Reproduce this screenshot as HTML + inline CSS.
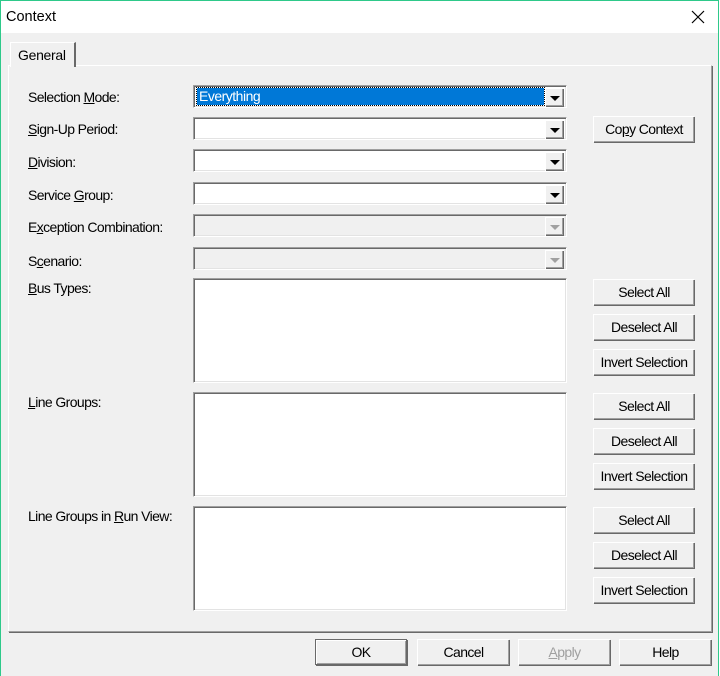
<!DOCTYPE html>
<html><head><meta charset="utf-8"><style>
*{box-sizing:border-box;margin:0;padding:0}
body{width:720px;height:676px;background:#fff;font-family:"Liberation Sans",Arial,sans-serif;font-size:14px;color:#000;position:relative;overflow:hidden}
.win{position:absolute;left:0;top:0;width:719px;height:676px;border:1px solid #2ec98a;border-bottom:none;background:#f0f0f0}
.title{position:absolute;left:0;top:0;width:717px;height:32px;background:#fff}
.title span{position:absolute;left:5px;top:8px;font-size:14.5px}
.x{position:absolute;left:690px;top:9px}
.a{position:absolute}
.panel{left:8px;top:65px;width:704px;height:567px;border-top:1px solid #fff;border-left:1px solid #fff;border-right:1px solid #a0a0a0;border-bottom:1px solid #a0a0a0;box-shadow:1px 1px 0 #696969}
.tab{left:10px;top:42px;width:66px;height:25px;background:#f0f0f0;border-top:1px solid #fff;border-left:1px solid #fff;border-right:2px solid #696969;padding:4px 0 0 7px;font-size:14px;letter-spacing:-0.3px}
.lbl{left:28px;font-size:14px;letter-spacing:-0.6px}
.sunk{border-top:1px solid #a0a0a0;border-left:1px solid #a0a0a0;border-right:1px solid #fff;border-bottom:1px solid #fff;box-shadow:inset 1px 1px 0 #696969,inset -1px -1px 0 #e3e3e3;background:#fff}
.cb{left:193px;width:374px;height:23px}
.dis{background:#f0f0f0}
.dd{position:absolute;right:2px;top:2px;width:19px;height:19px;background:#f0f0f0;border-top:1px solid #fff;border-left:1px solid #fff;box-shadow:inset -1px -1px 0 #696969,inset -2px -2px 0 #a0a0a0}
.dd:after{content:"";position:absolute;left:4px;top:7px;border-left:5px solid transparent;border-right:5px solid transparent;border-top:5px solid #000}
.dis .dd:after{border-top-color:#a0a0a0}
.lb{left:193px;width:374px;height:105px}
.btn{background:#f0f0f0;border-top:1px solid #fff;border-left:1px solid #fff;box-shadow:inset -1px -1px 0 #a0a0a0,1px 1px 0 #696969;text-align:center;font-size:14px;line-height:24px;height:26px;letter-spacing:-0.6px}
.rb{left:593px;width:101px}
.bb{top:639px;width:92px;height:26px}
u{text-decoration:underline}
</style></head><body>
<div class="win">
<div class="title"><span>Context</span>
<svg class="x" width="14" height="14" viewBox="0 0 14 14"><path d="M1 1L13 13M13 1L1 13" stroke="#000" stroke-width="1.2"/></svg></div>
</div>
<div class="a panel"></div>
<div class="a tab">General</div>

<div class="a lbl" style="top:89px">Selection <u>M</u>ode:</div>
<div class="a lbl" style="top:121px"><u>S</u>ign-Up Period:</div>
<div class="a lbl" style="top:154px"><u>D</u>ivision:</div>
<div class="a lbl" style="top:187px">Service <u>G</u>roup:</div>
<div class="a lbl" style="top:219px">E<u>x</u>ception Combination:</div>
<div class="a lbl" style="top:253px">S<u>c</u>enario:</div>
<div class="a lbl" style="top:280px"><u>B</u>us Types:</div>
<div class="a lbl" style="top:394px"><u>L</u>ine Groups:</div>
<div class="a lbl" style="top:508px">Line Groups in <u>R</u>un View:</div>

<div class="a sunk cb" style="top:85px"><div style="position:absolute;left:3px;top:2px;width:347px;height:17px;background:#0078d7;color:#fff;outline:1px dotted #000;padding-left:2px;line-height:17px;letter-spacing:-0.5px">Everything</div><div class="dd"></div></div>
<div class="a sunk cb" style="top:117px"><div class="dd"></div></div>
<div class="a sunk cb" style="top:149px"><div class="dd"></div></div>
<div class="a sunk cb" style="top:182px"><div class="dd"></div></div>
<div class="a sunk cb dis" style="top:214px"><div class="dd"></div></div>
<div class="a sunk cb dis" style="top:247px"><div class="dd"></div></div>

<div class="a sunk lb" style="top:278px"></div>
<div class="a sunk lb" style="top:392px"></div>
<div class="a sunk lb" style="top:506px"></div>

<div class="a btn rb" style="top:116px">Co<u>p</u>y Context</div>
<div class="a btn rb" style="top:279px">Select All</div>
<div class="a btn rb" style="top:314px">Deselect All</div>
<div class="a btn rb" style="top:349px">Invert Selection</div>
<div class="a btn rb" style="top:393px">Select All</div>
<div class="a btn rb" style="top:428px">Deselect All</div>
<div class="a btn rb" style="top:463px">Invert Selection</div>
<div class="a btn rb" style="top:507px">Select All</div>
<div class="a btn rb" style="top:542px">Deselect All</div>
<div class="a btn rb" style="top:577px">Invert Selection</div>

<div class="a btn bb" style="left:315px;border:1px solid #696969;box-shadow:inset 1px 1px 0 #fff,inset -1px -1px 0 #a0a0a0,1px 1px 0 #696969">OK</div>
<div class="a btn bb" style="left:417px">Cancel</div>
<div class="a btn bb" style="left:518px;color:#a0a0a0"><u>A</u>pply</div>
<div class="a btn bb" style="left:619px">Help</div>
</body></html>
